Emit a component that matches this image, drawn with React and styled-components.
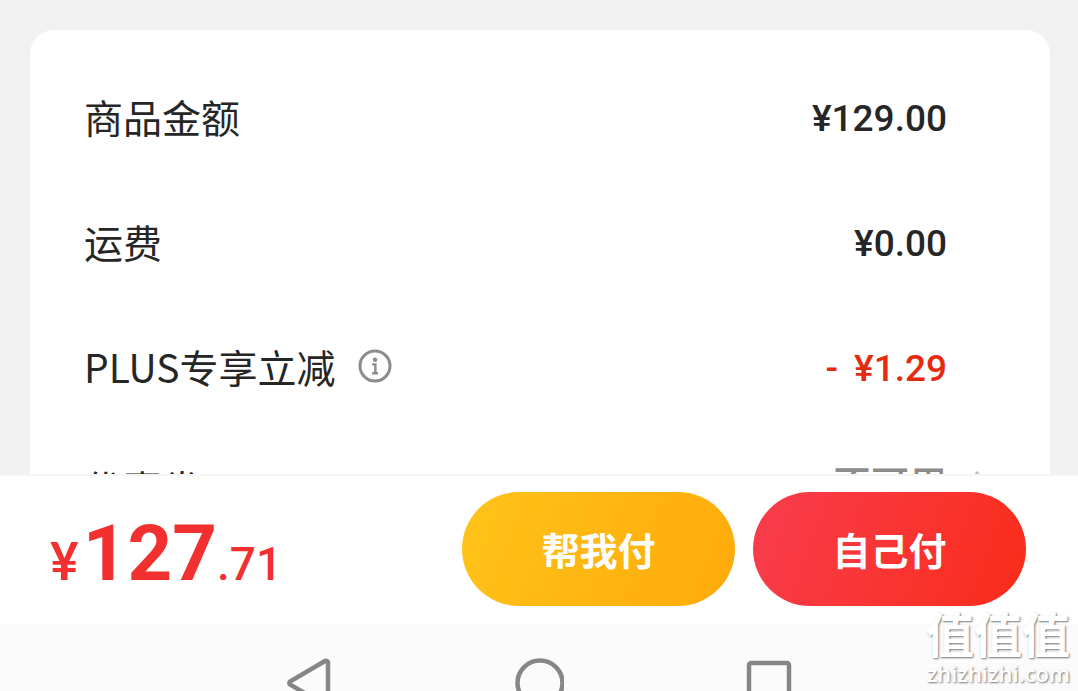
import styled, { createGlobalStyle } from 'styled-components';

const GlobalStyle = createGlobalStyle`
  * {
    box-sizing: border-box;
  }

  body {
    margin: 0;
    background: #f1f1f1;
    font-family: Roboto, 'Noto Sans CJK SC', sans-serif;
    color: #262626;
  }
`;

const Page = styled.div`
  position: relative;
  display: flex;
  flex-direction: column;
  height: 100vh;
  overflow: hidden;
`;

const Content = styled.main`
  flex: 1;
  min-height: 0;
  padding: 30px 28px 0 30px;
  overflow: hidden;
`;

const Card = styled.dl`
  margin: 0;
  padding: 26px 59px 26px 54px;
  background: #fff;
  border-radius: 24px;
`;

const Row = styled.div`
  display: grid;
  grid-template-columns: 1fr auto 44px;
  align-items: center;
  height: ${({ $compact }) => ($compact ? '116px' : '125px')};
`;

const Label = styled.dt`
  display: flex;
  align-items: center;
  gap: 22px;
  padding-bottom: 5px;
  font-family: 'Noto Sans CJK SC', sans-serif;
  font-size: 39px;
  line-height: 56px;
`;

const Value = styled.dd`
  display: flex;
  gap: 16px;
  margin: 0;
  font-size: 37px;
  line-height: 44px;
  font-weight: 500;
  color: ${({ $discount }) => ($discount ? '#e62a10' : '#262626')};
`;

const Unavailable = styled.dd`
  margin: 0;
  padding-bottom: 14px;
  font-family: 'Noto Sans CJK SC', sans-serif;
  font-size: 38px;
  line-height: 56px;
  font-weight: 500;
  color: #8c8c8c;
`;

const IconButton = styled.button`
  display: flex;
  padding: 0;
  border: 0;
  background: none;
  cursor: pointer;
`;

const ChevronButton = styled(IconButton)`
  justify-self: end;
  padding: 0 4px 14px 0;
`;

const PayBar = styled.footer`
  display: flex;
  align-items: center;
  justify-content: space-between;
  padding: 16px 52px 18px 50px;
  background: #fff;
  border-top: 2px solid #f5f5f5;
`;

const Total = styled.div`
  padding-top: 20px;
  font-size: 54px;
  line-height: 72px;
  font-weight: 500;
  color: #f2302f;
`;

const TotalMain = styled.span`
  margin-left: 4px;
  font-size: 78px;
  font-weight: 700;
`;

const TotalCents = styled.span`
  font-size: 46px;
`;

const Actions = styled.div`
  display: flex;
  gap: 18px;
`;

const PayButton = styled.button`
  width: 273px;
  height: 114px;
  padding: 0;
  border: 0;
  border-radius: 57px;
  background: ${({ $primary }) =>
    $primary
      ? 'linear-gradient(110deg, #f83d4e, #fa2c19)'
      : 'linear-gradient(110deg, #ffc31a, #ffaa0a)'};
  color: #fff;
  font-family: 'Noto Sans CJK SC', sans-serif;
  font-size: 38px;
  line-height: 56px;
  font-weight: 700;
  cursor: pointer;
`;

const NavBar = styled.nav`
  display: grid;
  grid-template-columns: repeat(3, 1fr);
  justify-items: center;
  align-items: start;
  height: 67px;
  padding: 34px 18% 0;
  background: #fbfbfb;
  overflow: hidden;
`;

const Watermark = styled.div`
  position: absolute;
  right: 8px;
  bottom: 4px;
  display: flex;
  flex-direction: column;
  align-items: flex-end;
  color: #fff;
  font-family: 'Noto Sans CJK SC', sans-serif;
  font-weight: 700;
  text-shadow: 1px 1px 2px #777;
  pointer-events: none;
`;

const WatermarkName = styled.span`
  font-size: 48px;
  line-height: 54px;
`;

const WatermarkSite = styled.span`
  font-family: 'Open Sans', sans-serif;
  font-size: 22px;
  line-height: 28px;
  font-weight: 600;
`;

const InfoIcon = () => (
  <svg width="34" height="34" viewBox="0 0 34 34" fill="none">
    <circle cx="17" cy="17" r="15" stroke="#8c8c8c" strokeWidth="3" />
    <circle cx="17" cy="10.8" r="2.2" fill="#8c8c8c" />
    <path d="M14.2 15.4h3.2v8.4M14.2 24.2h5.8" stroke="#8c8c8c" strokeWidth="2.4" />
  </svg>
);

const ChevronIcon = () => (
  <svg width="14" height="26" viewBox="0 0 14 26" fill="none">
    <path d="M3 3l9 10-9 10" stroke="#bfbfbf" strokeWidth="3" />
  </svg>
);

const navIcons = [
  {
    name: '返回',
    shape: <path d="M44 5a2 2 0 0 0-3-2L6 23.500a2 2 0 0 0 0 3L41 47a2 2 0 0 0 3-2z" />,
  },
  { name: '主页', shape: <circle cx="26" cy="25" r="22.5" /> },
  { name: '最近任务', shape: <rect x="5" y="5" width="40" height="41" rx="2" /> },
];

const App = () => {
  return (
    <Page>
      <GlobalStyle />
      <Content>
        <Card>
          <Row>
            <Label>商品金额</Label>
            <Value>¥129.00</Value>
          </Row>
          <Row>
            <Label>运费</Label>
            <Value>¥0.00</Value>
          </Row>
          <Row>
            <Label>
              PLUS专享立减
              <IconButton type="button" aria-label="说明">
                <InfoIcon />
              </IconButton>
            </Label>
            <Value $discount>
              <span>-</span>
              <span>¥1.29</span>
            </Value>
          </Row>
          <Row $compact>
            <Label>优惠券</Label>
            <Unavailable>不可用</Unavailable>
            <ChevronButton type="button" aria-label="查看优惠券">
              <ChevronIcon />
            </ChevronButton>
          </Row>
        </Card>
      </Content>
      <PayBar>
        <Total>
          ¥<TotalMain>127</TotalMain>
          <TotalCents>.71</TotalCents>
        </Total>
        <Actions>
          <PayButton type="button">帮我付</PayButton>
          <PayButton type="button" $primary>
            自己付
          </PayButton>
        </Actions>
      </PayBar>
      <NavBar>
        {navIcons.map(({ name, shape }) => (
          <IconButton key={name} type="button" aria-label={name}>
            <svg width="50" height="50" viewBox="0 0 50 50" fill="none" stroke="#868686" strokeWidth="4.5">
              {shape}
            </svg>
          </IconButton>
        ))}
      </NavBar>
      <Watermark>
        <WatermarkName>值值值</WatermarkName>
        <WatermarkSite>zhizhizhi.com</WatermarkSite>
      </Watermark>
    </Page>
  );
};

export default App;
